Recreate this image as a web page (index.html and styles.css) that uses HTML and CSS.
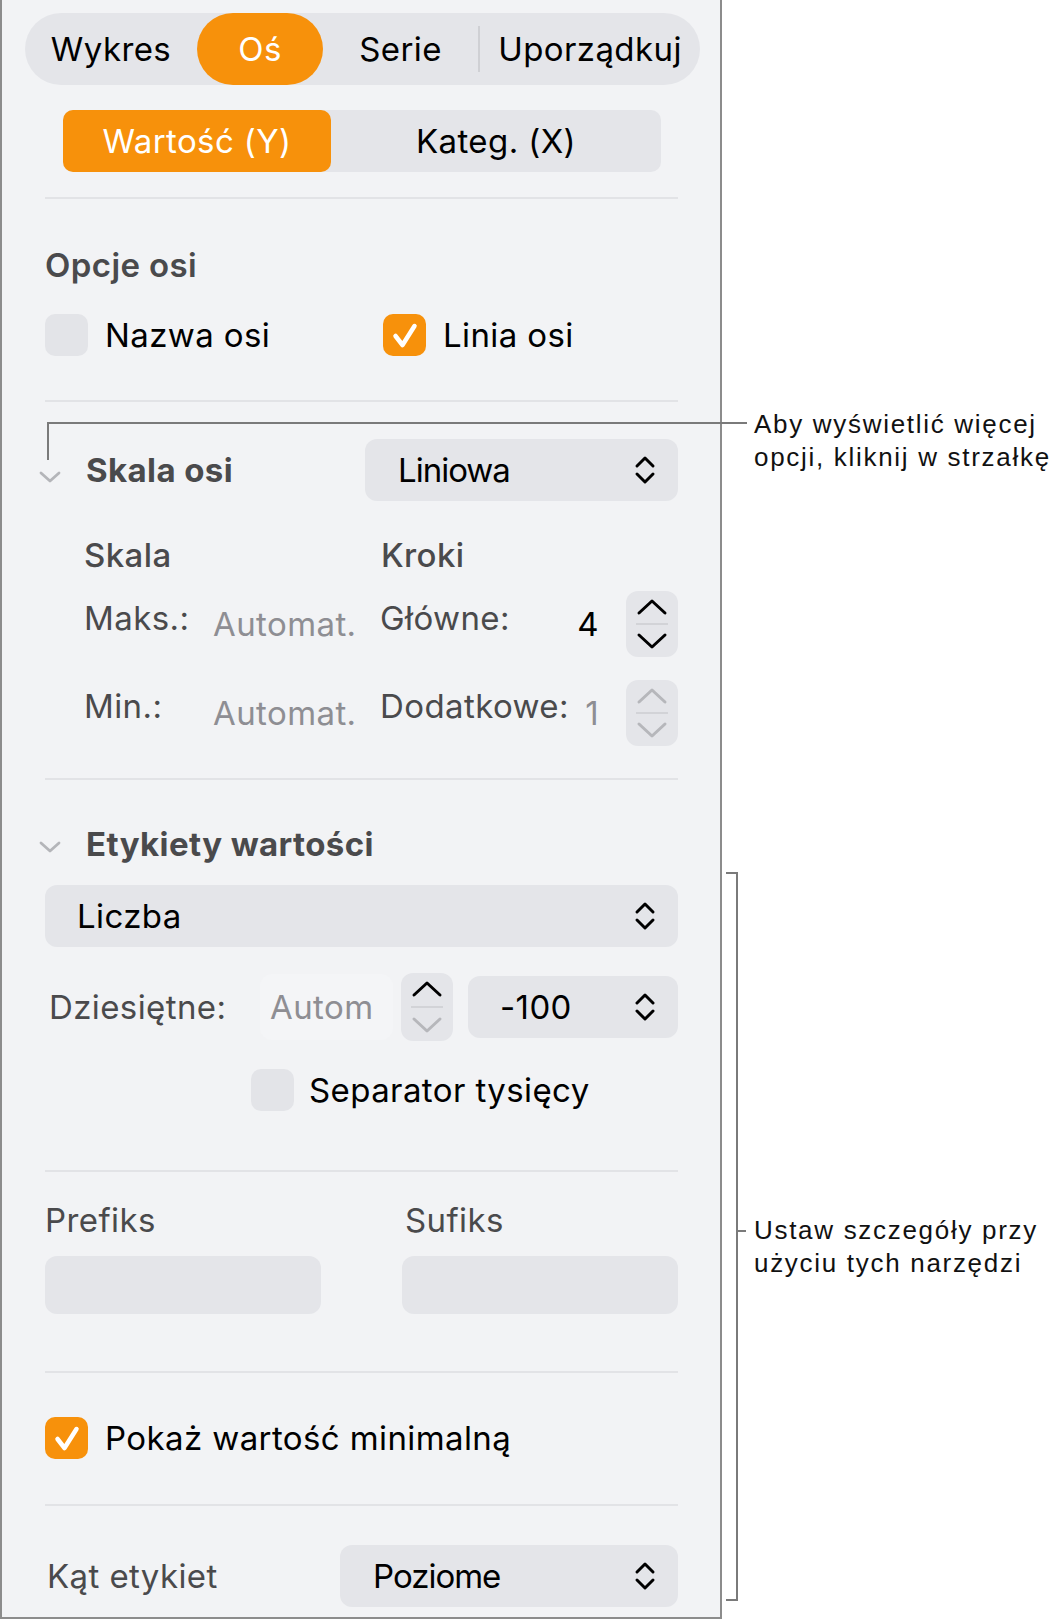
FILE: index.html
```html
<!DOCTYPE html>
<html lang="pl">
<head>
  <meta charset="UTF-8">
  <title>Oś – format wykresu</title>
  <link rel="stylesheet" href="styles.css">
</head>
<body>
  <div class="page">
    <aside class="inspector">
      <nav class="tabs">
        <span class="tab tab-wykres">Wykres</span>
        <span class="tab tab-os active">Oś</span>
        <span class="tab tab-serie">Serie</span>
        <span class="tab-sep"></span>
        <span class="tab tab-uporz">Uporządkuj</span>
      </nav>

      <div class="seg">
        <span class="seg-item active">Wartość (Y)</span>
        <span class="seg-item">Kateg. (X)</span>
      </div>

      <div class="rule r1"></div>

      <h3 class="head head-opts">Opcje osi</h3>
      <div class="checks">
        <label class="check"><span class="box"></span>Nazwa osi</label>
        <label class="check"><span class="box on"><svg viewBox="0 0 42 42"><path d="M12 22l7 9 12-19"/></svg></span>Linia osi</label>
      </div>

      <div class="rule r2"></div>

      <div class="sect-head scale-head">
        <svg class="disclose" viewBox="0 0 22 12"><path d="M2 2l9 8 9-8"/></svg>
        <h3 class="head">Skala osi</h3>
        <div class="select sel-liniowa">Liniowa
          <svg class="updown" viewBox="0 0 22 30"><path d="M3 11l8-8 8 8M3 19l8 8 8-8"/></svg>
        </div>
      </div>

      <div class="scale-cols">
        <span class="sub">Skala</span>
        <span class="sub">Kroki</span>
      </div>

      <div class="scale-row row-max">
        <span class="lbl lbl-a">Maks.:</span>
        <span class="val">Automat.</span>
        <span class="lbl lbl-b">Główne:</span>
        <span class="num">4</span>
        <span class="stepper">
          <svg viewBox="0 0 52 66"><path class="chev" d="M13 22l13-12 13 12M13 44l13 12 13-12"/><path class="mid" d="M10 33h32"/></svg>
        </span>
      </div>

      <div class="scale-row row-min">
        <span class="lbl lbl-a">Min.:</span>
        <span class="val">Automat.</span>
        <span class="lbl lbl-b">Dodatkowe:</span>
        <span class="num dim">1</span>
        <span class="stepper off">
          <svg viewBox="0 0 52 66"><path class="chev" d="M13 22l13-12 13 12M13 44l13 12 13-12"/><path class="mid" d="M10 33h32"/></svg>
        </span>
      </div>

      <div class="rule r3"></div>

      <div class="sect-head labels-head">
        <svg class="disclose" viewBox="0 0 22 12"><path d="M2 2l9 8 9-8"/></svg>
        <h3 class="head">Etykiety wartości</h3>
      </div>

      <div class="select sel-liczba">Liczba
        <svg class="updown" viewBox="0 0 22 30"><path d="M3 11l8-8 8 8M3 19l8 8 8-8"/></svg>
      </div>

      <div class="dec-row">
        <span class="lbl">Dziesiętne:</span>
        <span class="field">Autom</span>
        <span class="stepper half">
          <svg viewBox="0 0 52 68"><path class="chev" d="M13 22l13-12 13 12"/><path class="chev dimmed" d="M13 46l13 12 13-12"/><path class="mid" d="M10 34h32"/></svg>
        </span>
        <div class="select sel-neg">-100
          <svg class="updown" viewBox="0 0 22 30"><path d="M3 11l8-8 8 8M3 19l8 8 8-8"/></svg>
        </div>
      </div>

      <label class="check check-sep"><span class="box"></span>Separator tysięcy</label>

      <div class="rule r4"></div>

      <div class="affix">
        <span class="lbl">Prefiks</span>
        <span class="lbl">Sufiks</span>
        <span class="input"></span>
        <span class="input"></span>
      </div>

      <div class="rule r5"></div>

      <label class="check check-min"><span class="box on"><svg viewBox="0 0 42 42"><path d="M12 22l7 9 12-19"/></svg></span>Pokaż wartość minimalną</label>

      <div class="rule r6"></div>

      <div class="angle-row">
        <span class="lbl">Kąt etykiet</span>
        <div class="select sel-poziome">Poziome
          <svg class="updown" viewBox="0 0 22 30"><path d="M3 11l8-8 8 8M3 19l8 8 8-8"/></svg>
        </div>
      </div>
    </aside>

    <!-- objaśnienia obok panelu -->
    <div class="leader"></div>
    <p class="note note-top">Aby wyświetlić więcej<br>opcji, kliknij w strzałkę</p>

    <div class="bracket"></div>
    <div class="bracket-tick"></div>
    <p class="note note-side">Ustaw szczegóły przy<br>użyciu tych narzędzi</p>
  </div>
</body>
</html>
```

FILE: styles.css
```css
* {
  box-sizing: border-box;
}

body {
  margin: 0;
  background: #fff;
  font-family: Inter, 'Noto Sans', sans-serif;
  color: #000;
}

.page {
  position: relative;
  width: 1059px;
  height: 1620px;
}

/* panel inspektora */
.inspector {
  width: 722px;
  background: #f2f3f5;
  border: 2px solid #8c8c8c;
  border-top: 0;
  padding: 0 42px 10px 43px;
  display: flex;
  flex-direction: column;
  font-size: 33px;
  line-height: 40px;
  letter-spacing: 0.4px;
}

.tabs {
  display: flex;
  align-items: center;
  height: 72px;
  margin: 13px -22px 0 -20px;
  background: #e4e5e9;
  border-radius: 36px;
}

.tab {
  display: flex;
  align-items: center;
  justify-content: center;
  height: 72px;
}

.tab-wykres { width: 172px; }
.tab-os { width: 126px; }
.tab-serie { width: 155px; }
.tab-uporz { width: 220px; }

.tab.active {
  background: #f7910b;
  color: #fff;
  border-radius: 36px;
}

.tab-sep {
  width: 2px;
  height: 46px;
  background: #cfd0d4;
}

.seg {
  display: flex;
  width: 598px;
  height: 62px;
  margin: 25px 0 0 18px;
  background: #e4e5e9;
  border-radius: 10px;
}

.seg-item {
  flex: 1;
  display: flex;
  align-items: center;
  justify-content: center;
}

.seg-item.active {
  flex: 0 0 268px;
  background: #f7910b;
  color: #fff;
  border-radius: 10px;
}

.rule {
  height: 2px;
  flex: none;
  background: #e2e3e6;
}

.r1 { margin-top: 25px; }
.r2 { margin-top: 44px; }
.r3 { margin-top: 32px; }
.r4 { margin-top: 59px; }
.r5 { margin-top: 57px; }
.r6 { margin-top: 45px; }

.head {
  margin: 0;
  font-size: 33px;
  font-weight: 700;
  color: #4a4a4c;
}

.head-opts {
  margin-top: 46px;
  font-weight: 600;
}

/* pola wyboru */
.check {
  display: flex;
  align-items: center;
  height: 42px;
}

.box {
  width: 43px;
  height: 42px;
  margin-right: 17px;
  border-radius: 10px;
  background: #e3e4e8;
  flex: none;
}

.box.on {
  background: #f7910b;
}

.box svg {
  display: block;
  width: 43px;
  height: 42px;
}

.box svg path {
  fill: none;
  stroke: #fff;
  stroke-width: 4.5;
  stroke-linecap: round;
  stroke-linejoin: round;
}

.checks {
  display: grid;
  grid-template-columns: 338px 1fr;
  margin-top: 29px;
}

/* nagłówki sekcji ze strzałką */
.sect-head {
  display: flex;
  align-items: center;
}

.disclose {
  width: 22px;
  height: 12px;
  margin: 0 25px 0 -6px;
}

.disclose path {
  fill: none;
  stroke: #b4b5b9;
  stroke-width: 2.8;
  stroke-linecap: round;
  stroke-linejoin: round;
}

.scale-head {
  height: 62px;
  margin-top: 37px;
}

.scale-head .disclose {
  margin-top: 14px;
}

.select {
  display: flex;
  align-items: center;
  justify-content: space-between;
  height: 62px;
  padding: 0 22px 0 33px;
  background: #e4e5e9;
  border-radius: 12px;
}

.updown {
  width: 22px;
  height: 30px;
}

.updown path {
  fill: none;
  stroke: #000;
  stroke-width: 3;
  stroke-linecap: round;
  stroke-linejoin: round;
}

.sel-liniowa {
  width: 313px;
  margin-left: auto;
  letter-spacing: -1px;
}

.scale-cols {
  display: flex;
  margin-top: 34px;
  padding-left: 39px;
}

.sub {
  font-weight: 500;
  color: #4a4a4c;
}

.scale-cols .sub:first-child {
  width: 297px;
}

.scale-row {
  display: flex;
  align-items: center;
  padding-left: 39px;
}

.row-max {
  height: 66px;
  margin-top: 16px;
}

.row-min {
  height: 67px;
  margin-top: 22px;
}

.lbl {
  color: #4a4a4c;
}

.scale-row .lbl {
  margin-bottom: 13px;
}

.lbl-a {
  width: 129px;
}

.val {
  width: 167px;
  color: #8e8e93;
}

.num {
  flex: 1;
  text-align: right;
}

.num.dim {
  color: #8e8e93;
}

.stepper {
  width: 52px;
  height: 66px;
  margin-left: 27px;
  border-radius: 12px;
  background: #e4e5e9;
  flex: none;
}

.stepper svg {
  display: block;
  width: 100%;
  height: 100%;
}

.stepper .chev {
  fill: none;
  stroke: #000;
  stroke-width: 3;
  stroke-linecap: round;
  stroke-linejoin: round;
}

.stepper .mid {
  stroke: #d2d3d7;
  stroke-width: 2;
}

.stepper.off .chev,
.stepper .chev.dimmed {
  stroke: #b6b7bb;
}

/* etykiety wartości */
.labels-head {
  height: 40px;
  margin-top: 44px;
}

.labels-head .disclose {
  margin-top: 6px;
}

.sel-liczba {
  margin-top: 21px;
  padding-left: 32px;
}

.dec-row {
  display: flex;
  align-items: center;
  height: 68px;
  margin-top: 26px;
}

.dec-row .lbl {
  width: 215px;
  padding-left: 4px;
}

.field {
  width: 133px;
  height: 66px;
  padding-left: 10px;
  display: flex;
  align-items: center;
  color: #8e8e93;
  background: #f4f5f7;
  border-radius: 12px;
}

.stepper.half {
  height: 68px;
  margin-left: 8px;
}

.sel-neg {
  width: 210px;
  margin-left: 15px;
  padding-left: 32px;
}

.check-sep {
  margin: 28px 0 0 206px;
}

.check-sep .box {
  margin-right: 15px;
}

/* prefiks / sufiks */
.affix {
  display: grid;
  grid-template-columns: 276px 276px;
  column-gap: 81px;
  row-gap: 16px;
  margin-top: 28px;
}

.affix .lbl:nth-child(2) {
  padding-left: 3px;
}

.input {
  height: 58px;
  background: #e4e5e9;
  border-radius: 12px;
}

.check-min {
  margin-top: 44px;
}

.angle-row {
  display: flex;
  align-items: center;
  margin-top: 39px;
}

.angle-row .lbl {
  padding-left: 2px;
}

.sel-poziome {
  width: 338px;
  margin-left: auto;
  letter-spacing: -1px;
}

/* objaśnienia */
.leader {
  position: absolute;
  left: 47px;
  top: 422px;
  width: 700px;
  height: 38px;
  border-top: 2px solid #7a7a7a;
  border-left: 2px solid #7a7a7a;
}

.bracket {
  position: absolute;
  left: 726px;
  top: 872px;
  width: 12px;
  height: 729px;
  border: 2px solid #7a7a7a;
  border-left: 0;
}

.bracket-tick {
  position: absolute;
  left: 736px;
  top: 1230px;
  width: 10px;
  height: 2px;
  background: #7a7a7a;
}

.note {
  position: absolute;
  left: 754px;
  margin: 0;
  font-family: 'Liberation Sans', Arial, sans-serif;
  font-size: 26px;
  line-height: 33px;
  letter-spacing: 1.7px;
  color: #111;
}

.note-top {
  top: 408px;
}

.note-side {
  top: 1214px;
}
```
